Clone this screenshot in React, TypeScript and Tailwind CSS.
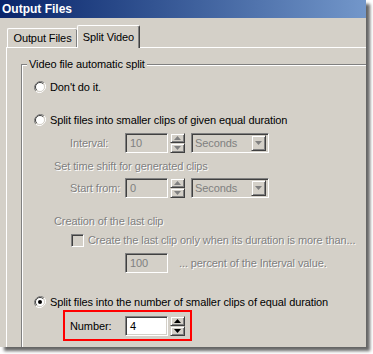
import type { ReactNode } from "react";

const FONT = "font-['Liberation_Sans',Arial,sans-serif]";

// classic 3D borders
const SUNKEN =
  "border border-t-[#808080] border-l-[#808080] border-b-white border-r-white shadow-[inset_1px_1px_0_#404040,inset_-1px_-1px_0_#d4d0c8]";
const RAISED =
  "border border-t-[#d4d0c8] border-l-[#d4d0c8] border-b-[#404040] border-r-[#404040] shadow-[inset_1px_1px_0_#fff,inset_-1px_-1px_0_#808080]";

const DISABLED = "text-[#808080] [text-shadow:1px_1px_0_#fff]";

function Radio({ checked = false }: { checked?: boolean }) {
  return (
    <svg width="12" height="12" viewBox="0 0 12 12" className="shrink-0">
      <path d="M10.2 1.8 A6 6 0 0 0 1.8 10.2" fill="none" stroke="#808080" strokeWidth="1" />
      <path d="M1.8 10.2 A6 6 0 0 0 10.2 1.8" fill="none" stroke="#fff" strokeWidth="1" />
      <circle cx="6" cy="6" r="4.5" fill="#fff" />
      <path d="M9.2 2.8 A4.5 4.5 0 0 0 2.8 9.2" fill="none" stroke="#404040" strokeWidth="1" />
      <path d="M2.8 9.2 A4.5 4.5 0 0 0 9.2 2.8" fill="none" stroke="#d4d0c8" strokeWidth="1" />
      {checked && <circle cx="6" cy="6" r="2" fill="#000" />}
    </svg>
  );
}

function Arrow({ dir, color }: { dir: "up" | "down"; color: string }) {
  return (
    <svg width="7" height="4" viewBox="0 0 7 4">
      {dir === "up" ? (
        <path d="M3.5 0 L7 4 L0 4 Z" fill={color} />
      ) : (
        <path d="M0 0 L7 0 L3.5 4 Z" fill={color} />
      )}
    </svg>
  );
}

function Spinner({ enabled = false }: { enabled?: boolean }) {
  const c = enabled ? "#000" : "#808080";
  return (
    <div className="ml-[2px] flex h-[20px] w-[15px] flex-col">
      <div className={`flex h-[10px] items-center justify-center bg-[#d4d0c8] ${RAISED}`}>
        <Arrow dir="up" color={c} />
      </div>
      <div className={`flex h-[10px] items-center justify-center bg-[#d4d0c8] ${RAISED}`}>
        <Arrow dir="down" color={c} />
      </div>
    </div>
  );
}

function NumberBox({ value, enabled = false }: { value: string; enabled?: boolean }) {
  return (
    <div
      className={`flex h-[20px] w-[43px] items-center pl-[4px] ${SUNKEN} ${
        enabled ? "bg-white text-black" : "bg-[#d4d0c8] text-[#808080]"
      }`}
    >
      {value}
    </div>
  );
}

function Combo({ value }: { value: string }) {
  return (
    <div className={`ml-[6px] flex h-[20px] w-[78px] items-center justify-between bg-[#d4d0c8] pl-[3px] pr-[2px] ${SUNKEN}`}>
      <span className="text-[#808080]">{value}</span>
      <div className={`flex h-[16px] w-[15px] items-center justify-center bg-[#d4d0c8] ${RAISED}`}>
        <Arrow dir="down" color="#808080" />
      </div>
    </div>
  );
}

function Row({ className = "", children }: { className?: string; children: ReactNode }) {
  return <div className={`flex items-center ${className}`}>{children}</div>;
}

export default function App() {
  return (
    <div className={`relative h-[354px] w-[373px] overflow-hidden bg-white text-[11px] leading-[14px] tracking-[-0.1px] text-black ${FONT}`}>
      <div className="flex h-[347px] w-[366px] flex-col overflow-hidden bg-[#d4d0c8] shadow-[4px_4px_3px_rgba(0,0,0,0.6)]">
        {/* Title bar */}
        <div className="flex h-[18px] shrink-0 items-center bg-gradient-to-r from-[#0a246a] to-[#7397ca] pl-[2px] text-[12px] font-bold tracking-normal text-white">
          Output Files
        </div>

        {/* Tabs */}
        <div className="pl-[6px] pt-[7px]">
          <div className="flex h-[22px] items-end">
            <div className="ml-[1px] flex h-[19px] w-[70px] items-center justify-center rounded-t-[2px] border-l border-t border-white shadow-[inset_-1px_0_0_#808080]">
              Output Files
            </div>
            <div className="relative z-10 -mb-[1px] flex h-[23px] w-[63px] items-center justify-center rounded-t-[2px] border-l border-t border-r border-white border-r-[#404040] bg-[#d4d0c8] pb-[1px] shadow-[inset_-1px_0_0_#808080]">
              Split Video
            </div>
          </div>

          {/* Tab panel */}
          <div className="h-[300px] border-l border-t border-white pt-[16px] pl-[14px]">
            {/* Group box */}
            <div className="h-[290px] w-[400px] border-l border-t border-[#808080] shadow-[inset_1px_1px_0_#fff]">
              <div className="-mt-[8px] ml-[5px] w-fit bg-[#d4d0c8] px-[2px]">Video file automatic split</div>

              <Row className="ml-[12px] mt-[9px] h-[14px] gap-[4px]">
                <Radio />
                <span>Don't do it.</span>
              </Row>

              <Row className="ml-[12px] mt-[19px] h-[14px] gap-[4px]">
                <Radio />
                <span>Split files into smaller clips of given equal duration</span>
              </Row>

              <Row className="ml-[48px] mt-[6px] h-[20px]">
                <span className={`w-[55px] ${DISABLED}`}>Interval:</span>
                <NumberBox value="10" />
                <Spinner />
                <Combo value="Seconds" />
              </Row>

              <Row className={`ml-[32px] mt-[6px] h-[14px] ${DISABLED}`}>Set time shift for generated clips</Row>

              <Row className="ml-[48px] mt-[5px] h-[20px]">
                <span className={`w-[55px] ${DISABLED}`}>Start from:</span>
                <NumberBox value="0" />
                <Spinner />
                <Combo value="Seconds" />
              </Row>

              <Row className={`ml-[32px] mt-[16px] h-[14px] ${DISABLED}`}>Creation of the last clip</Row>

              <Row className="ml-[49px] mt-[5px] h-[14px] gap-[4px]">
                <div className={`h-[13px] w-[13px] shrink-0 bg-[#d4d0c8] ${SUNKEN}`} />
                <span className={DISABLED}>Create the last clip only when its duration is more than...</span>
              </Row>

              <Row className="ml-[103px] mt-[6px] h-[20px]">
                <NumberBox value="100" />
                <span className={`ml-[11px] ${DISABLED}`}>... percent of the Interval value.</span>
              </Row>

              <Row className="ml-[12px] mt-[22px] h-[14px] gap-[4px]">
                <Radio checked />
                <span>Split files into the number of smaller clips of equal duration</span>
              </Row>

              <div className="ml-[41px] mt-[1px] h-[31px] w-[129px] border-[2px] border-[#ff0000] pl-[5px] pt-[4px]">
                <Row className="h-[20px]">
                  <span className="w-[55px]">Number:</span>
                  <NumberBox value="4" enabled />
                  <Spinner enabled />
                </Row>
              </div>
            </div>
          </div>
        </div>
      </div>
    </div>
  );
}
